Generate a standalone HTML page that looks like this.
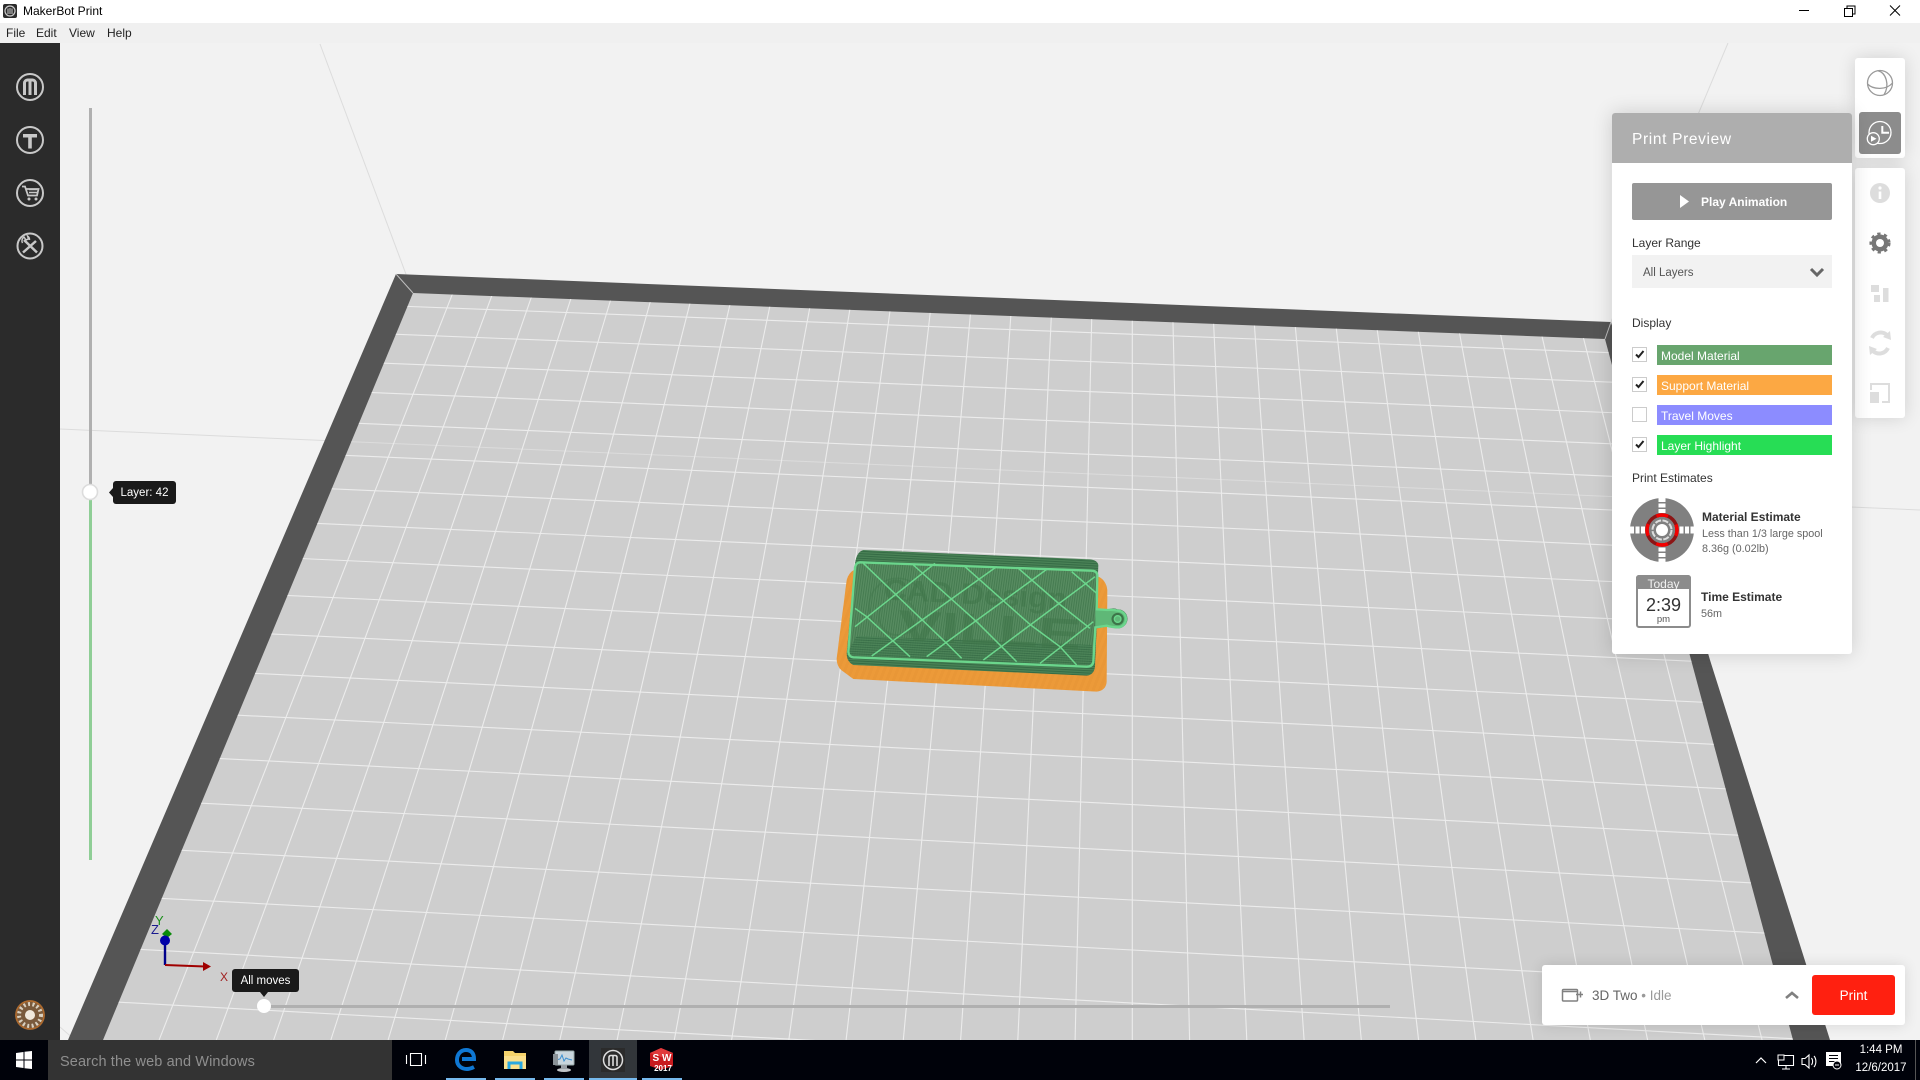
<!DOCTYPE html>
<html><head><meta charset="utf-8"><title>MakerBot Print</title>
<style>
html,body{margin:0;padding:0;width:1920px;height:1080px;overflow:hidden;background:#f2f2f2;font-family:"Liberation Sans","DejaVu Sans",sans-serif}
.a{position:absolute}
.t{position:absolute;white-space:nowrap;line-height:1}
svg{position:absolute;left:0;top:0}
.bar{position:absolute;left:1657px;width:175px;height:20px;color:#fff;font-size:12px;line-height:22px;text-indent:4px}
.cb{position:absolute;left:1632px;width:13px;height:13px;border:1px solid #ccc;background:#fff}
</style></head><body>
<svg width="1920" height="1080" viewBox="0 0 1920 1080">
<defs>
<clipPath id="pl"><polygon points="413,293 1605,339 1793,1040 103,1040"/></clipPath>
<pattern id="or" width="2.600" height="6" patternUnits="userSpaceOnUse" patternTransform="rotate(3)"><rect width="2.600" height="6" fill="#f6a23e"/><rect width="1" height="6" fill="#d98a2e"/></pattern>
<pattern id="gr" width="7" height="7" patternUnits="userSpaceOnUse" patternTransform="rotate(8)"><rect width="7" height="7" fill="#588c61"/><rect width="3" height="7" fill="#457b50"/></pattern>
<pattern id="gd" width="7" height="7" patternUnits="userSpaceOnUse" patternTransform="rotate(3)"><rect width="7" height="7" fill="#4a8256"/><rect width="7" height="3" fill="#356b45"/></pattern>
</defs>
<rect width="1920" height="1080" fill="#f2f2f2"/>
<g stroke="#dcdcdc" stroke-width="1" fill="none">
<line x1="320" y1="44" x2="413" y2="293"/>
<line x1="1728" y1="43" x2="1611" y2="322"/>
<line x1="60" y1="429" x2="1920" y2="510"/>
<line x1="60" y1="1027" x2="75" y2="1040"/>
</g>
<polygon points="396,274 1611,322 1710,660 1830,1040 68,1040" fill="#555"/>
<polygon points="413,293 1605,339 1793,1040 103,1040" fill="#cecece"/>
<path d="M396 274L413 293M1611 322L1605 339" stroke="#bdbdbd" fill="none"/>
<g clip-path="url(#pl)">
<line x1="60" y1="429" x2="1920" y2="510" stroke="#dcdcdc" stroke-width="1"/>
<g stroke="#ececec" stroke-width="1.100">
<line x1="0" y1="290.7" x2="1920" y2="364.6"/><line x1="0" y1="318.7" x2="1920" y2="394.3"/><line x1="0" y1="347.7" x2="1920" y2="425.1"/><line x1="0" y1="377.2" x2="1920" y2="456.5"/><line x1="0" y1="408.2" x2="1920" y2="489.3"/><line x1="0" y1="440.5" x2="1920" y2="523.3"/><line x1="0" y1="474.2" x2="1920" y2="558.7"/><line x1="0" y1="509.2" x2="1920" y2="595.4"/><line x1="0" y1="544.7" x2="1920" y2="632.9"/><line x1="0" y1="582" x2="1920" y2="671.9"/><line x1="0" y1="621" x2="1920" y2="712.6"/><line x1="0" y1="661" x2="1920" y2="754.3"/><line x1="0" y1="703.4" x2="1920" y2="798.4"/><line x1="0" y1="747.4" x2="1920" y2="844.4"/><line x1="0" y1="792.8" x2="1920" y2="891.5"/><line x1="0" y1="840.8" x2="1920" y2="941.2"/><line x1="0" y1="889.8" x2="1920" y2="991.9"/><line x1="0" y1="941.8" x2="1920" y2="1045.6"/><line x1="0" y1="995.6" x2="1920" y2="1101.4"/>
<line x1="452.8" y1="293" x2="159.1" y2="1040"/><line x1="492.8" y1="293" x2="216.3" y2="1040"/><line x1="532.8" y1="293" x2="273.6" y2="1040"/><line x1="572.7" y1="293" x2="330.8" y2="1040"/><line x1="612.7" y1="293" x2="388.1" y2="1040"/><line x1="652.7" y1="293" x2="445.3" y2="1040"/><line x1="692.6" y1="293" x2="502.6" y2="1040"/><line x1="732.6" y1="293" x2="559.8" y2="1040"/><line x1="772.6" y1="293" x2="617.1" y2="1040"/><line x1="812.5" y1="293" x2="674.3" y2="1040"/><line x1="852.5" y1="293" x2="731.6" y2="1040"/><line x1="892.5" y1="293" x2="788.8" y2="1040"/><line x1="932.5" y1="293" x2="846.1" y2="1040"/><line x1="972.4" y1="293" x2="903.3" y2="1040"/><line x1="1012.4" y1="293" x2="960.6" y2="1040"/><line x1="1052.4" y1="293" x2="1017.8" y2="1040"/><line x1="1092.3" y1="293" x2="1075.1" y2="1040"/><line x1="1132.3" y1="293" x2="1132.3" y2="1040"/><line x1="1172.3" y1="293" x2="1189.6" y2="1040"/><line x1="1212.2" y1="293" x2="1246.8" y2="1040"/><line x1="1252.2" y1="293" x2="1304.1" y2="1040"/><line x1="1292.2" y1="293" x2="1361.3" y2="1040"/><line x1="1332.2" y1="293" x2="1418.6" y2="1040"/><line x1="1372.1" y1="293" x2="1475.8" y2="1040"/><line x1="1412.1" y1="293" x2="1533.1" y2="1040"/><line x1="1452.1" y1="293" x2="1590.3" y2="1040"/><line x1="1492" y1="293" x2="1647.6" y2="1040"/><line x1="1532" y1="293" x2="1704.8" y2="1040"/><line x1="1572" y1="293" x2="1762.1" y2="1040"/>
</g></g>
<!-- keychain, coordinates in 3x crop space -->
<g transform="translate(820 530) scale(.33333)">
<path d="M105 118 Q85 128 80 150 L50 385 Q50 412 70 425 L100 447 L830 485 Q858 482 860 455 L862 180 Q858 150 835 140 Z" fill="url(#or)"/>
<path d="M130 60 Q110 65 105 100 L80 370 Q80 395 100 405 L800 437 Q822 435 825 410 L830 295 L860 290 Q880 295 895 295 A28 28 0 0 0 893 238 Q880 232 865 238 L830 235 L835 105 Q832 90 810 88 Z" fill="url(#gd)"/>
<path d="M120 97 Q108 98 105 112 L85 365 Q86 380 100 382 L800 410 Q818 410 820 395 L824 295 L860 287 Q875 292 893 292 A25 25 0 0 0 893 242 Q878 238 862 240 L830 238 L832 135 Q830 122 815 122 Z" fill="url(#gr)"/>
<path d="M110 318 L815 345 L820 395 Q818 410 800 410 L100 382 Q86 380 85 365 Z" fill="url(#gd)" opacity=".8"/>
<g fill="none" stroke="#42784d" stroke-width="5" opacity=".45">
<circle cx="232" cy="230" r="85"/><circle cx="232" cy="260" r="55"/>
</g>
<text transform="translate(190 208) rotate(3)" font-family="Liberation Sans" font-weight="bold" font-size="88" fill="#3f7549" opacity=".5" textLength="550" lengthAdjust="spacingAndGlyphs">CAD Design</text>
<text transform="translate(232 330) rotate(3)" font-family="Liberation Sans" font-weight="bold" font-size="130" fill="#3f7549" opacity=".5" textLength="550" lengthAdjust="spacingAndGlyphs">VILLE</text>
<path d="M826 240 L862 240 Q878 238 893 242 A25 25 0 0 1 893 292 Q875 292 860 287 L826 292 Z" fill="#5fb877"/>
<g fill="none" stroke="#6bd68c" stroke-width="4.500">
<path d="M130 100 L385 345 L425 385 M280 105 L470 275 L590 395 M435 110 L632 285 L720 350 L770 405 M595 115 L718 222 L810 295 M755 125 L830 190 M105 235 L140 260 L270 380 M105 290 L345 100 M155 378 L530 110 M320 380 L680 118 M490 390 L825 140 M660 400 L820 275"/>
<path d="M120 97 Q108 98 105 112 L85 365 Q86 380 100 382 L800 410 Q818 410 820 395 L826 292 L860 287 Q875 292 893 292 A25 25 0 0 0 893 242 Q878 238 862 240 L830 238 L832 135 Q830 122 815 122 Z" stroke-width="7"/>
<circle cx="893" cy="267" r="15" stroke="#3d7549" stroke-width="7"/>
<circle cx="893" cy="267" r="10" stroke="#6bd68c" stroke-width="4"/>
</g>
</g>
<!-- axes -->
<g>
<line x1="165" y1="965" x2="165" y2="940" stroke="#00008c" stroke-width="2.400"/>
<line x1="165" y1="965" x2="205" y2="966.5" stroke="#a00000" stroke-width="2"/>
<polygon points="203,962 211,966.5 203,971" fill="#a00000"/>
<polygon points="167,929 172,934 167,938 162,934" fill="#0a8a0a"/>
<circle cx="165" cy="940.5" r="5" fill="#0000a8"/>
</g>
<!-- sliders -->
<rect x="89" y="108" width="3" height="384" fill="#b0b0b0"/>
<rect x="89" y="492" width="3" height="368" fill="#8fce96"/>
<circle cx="90" cy="492" r="7.500" fill="#fff" stroke="#dcdcdc" stroke-width="1.600"/>
<rect x="270" y="1005" width="1120" height="3" fill="#b0b0b0"/>
<circle cx="264" cy="1006" r="7" fill="#fff"/>
<polygon points="113,488 109,492.5 113,497" fill="#1a1a1a"/>
<polygon points="260,992 268,992 264,997" fill="#1a1a1a"/>
</svg>

<div class="t" style="left:155px;top:914px;font-size:13px;color:#1a8f1a">Y</div>
<div class="t" style="left:151px;top:923px;font-size:13px;color:#1a1a8f">Z</div>
<div class="t" style="left:220px;top:971px;font-size:12px;color:#a02020">X</div>

<div class="a" style="left:113px;top:481px;width:63px;height:23px;background:#1a1a1a;border-radius:3px;color:#fff;font-size:11.5px;line-height:25px;text-align:center">Layer: 42</div>
<div class="a" style="left:232px;top:969px;width:67px;height:23px;background:#1a1a1a;border-radius:3px;color:#fff;font-size:11.5px;line-height:25px;text-align:center">All moves</div>

<!-- chrome -->
<div class="a" style="left:0;top:0;width:1920px;height:23px;background:#fff"></div>
<div class="a" style="left:0;top:23px;width:1920px;height:20px;background:#f0f0f0"></div>
<div class="a" style="left:0;top:43px;width:60px;height:997px;background:#2b2b2b"></div>
<div class="t" style="left:23px;top:5px;font-size:12px;color:#000">MakerBot Print</div>
<div class="t" style="left:6px;top:27px;font-size:12px;color:#222">File</div>
<div class="t" style="left:36px;top:27px;font-size:12px;color:#222">Edit</div>
<div class="t" style="left:69px;top:27px;font-size:12px;color:#222">View</div>
<div class="t" style="left:107px;top:27px;font-size:12px;color:#222">Help</div>

<!-- toolbar cards -->
<div class="a" style="left:1855px;top:58px;width:50px;height:100px;background:#fff;border-radius:3px;box-shadow:0 0 18px rgba(0,0,0,.14)"></div>
<div class="a" style="left:1859px;top:112px;width:42px;height:42px;background:#8c8c8c;border-radius:3px"></div>
<div class="a" style="left:1855px;top:168px;width:50px;height:250px;background:#fff;border-radius:3px;box-shadow:0 0 18px rgba(0,0,0,.14)"></div>

<!-- panel -->
<div class="a" style="left:1612px;top:113px;width:240px;height:541px;background:#fff;border-radius:3px;box-shadow:0 0 20px rgba(0,0,0,.16)"></div>
<div class="a" style="left:1612px;top:113px;width:240px;height:50px;background:#aeaeae;border-radius:3px 3px 0 0"></div>
<div class="t" style="left:1632px;top:132px;font-size:15.5px;color:#fff;letter-spacing:.65px">Print Preview</div>
<div class="a" style="left:1632px;top:183px;width:200px;height:37px;background:#969696;border-radius:2px"></div>
<div class="t" style="left:1701px;top:195.5px;font-size:12px;font-weight:bold;color:#fff">Play Animation</div>
<div class="t" style="left:1632px;top:237px;font-size:12px;color:#333">Layer Range</div>
<div class="a" style="left:1632px;top:255px;width:200px;height:33px;background:#f2f2f2"></div>
<div class="t" style="left:1643px;top:268px;font-size:11.5px;color:#555">All Layers</div>
<div class="t" style="left:1632px;top:317px;font-size:12px;color:#333">Display</div>

<div class="cb" style="top:347px"></div><div class="cb" style="top:377px"></div><div class="cb" style="top:407px"></div><div class="cb" style="top:437px"></div>
<div class="bar" style="top:345px;background:#68a56e">Model Material</div>
<div class="bar" style="top:375px;background:#fca843">Support Material</div>
<div class="bar" style="top:405px;background:#8c8cff">Travel Moves</div>
<div class="bar" style="top:435px;background:#27dd55">Layer Highlight</div>

<div class="t" style="left:1632px;top:472px;font-size:12px;color:#333">Print Estimates</div>
<div class="t" style="left:1702px;top:511px;font-size:12px;font-weight:bold;color:#333">Material Estimate</div>
<div class="t" style="left:1702px;top:529px;font-size:10.8px;color:#666">Less than 1/3 large spool</div>
<div class="t" style="left:1702px;top:543.500px;font-size:10.8px;color:#666">8.36g (0.02lb)</div>
<div class="t" style="left:1701px;top:591px;font-size:12px;font-weight:bold;color:#333">Time Estimate</div>
<div class="t" style="left:1701px;top:608.500px;font-size:10.8px;color:#666">56m</div>

<!-- calendar -->
<div class="a" style="left:1636px;top:575px;width:51px;height:49px;border:2px solid #8c8c8c;border-radius:3px;background:#fff"></div>
<div class="a" style="left:1636px;top:575px;width:55px;height:14px;background:#8c8c8c;border-radius:3px 3px 0 0;overflow:hidden;color:#f2f2f2;font-size:12px;line-height:18px;text-align:center">Today</div>
<div class="t" style="left:1636px;width:55px;text-align:center;top:596px;font-size:18px;color:#333">2:39</div>
<div class="t" style="left:1636px;width:55px;text-align:center;top:615px;font-size:9.500px;color:#555">pm</div>

<!-- print bar -->
<div class="a" style="left:1542px;top:965px;width:363px;height:60px;background:#fff;border-radius:3px;box-shadow:0 0 14px rgba(0,0,0,.12)"></div>
<div class="a" style="left:1812px;top:975px;width:83px;height:40px;background:#ff2010;border-radius:3px;color:#fff;font-size:13.5px;line-height:42px;text-align:center">Print</div>
<div class="t" style="left:1592px;top:989px;font-size:13.5px;color:#666">3D Two <span style="color:#999">• Idle</span></div>

<!-- taskbar -->
<div class="a" style="left:0;top:1040px;width:1920px;height:40px;background:#00020a"></div>
<div class="a" style="left:48px;top:1040px;width:344px;height:40px;background:#333"></div>
<div class="t" style="left:60px;top:1055px;font-size:14.5px;color:#8f8f8f;letter-spacing:.12px">Search the web and Windows</div>
<div class="a" style="left:589px;top:1040px;width:48px;height:40px;background:#32363a"></div>
<div class="a" style="left:446px;top:1078px;width:40px;height:2px;background:#76b9ed"></div>
<div class="a" style="left:495px;top:1078px;width:40px;height:2px;background:#76b9ed"></div>
<div class="a" style="left:544px;top:1078px;width:40px;height:2px;background:#76b9ed"></div>
<div class="a" style="left:589px;top:1078px;width:48px;height:2px;background:#76b9ed"></div>
<div class="a" style="left:642px;top:1078px;width:40px;height:2px;background:#76b9ed"></div>
<div class="t" style="left:1841px;width:80px;text-align:center;top:1045px;font-size:11.5px;color:#fff">1:44 PM</div>
<div class="t" style="left:1841px;width:80px;text-align:center;top:1063px;font-size:11.5px;color:#fff">12/6/2017</div>

<!-- icons overlay -->
<svg width="1920" height="1080" viewBox="0 0 1920 1080">
<!-- title icon -->
<rect x="3" y="4" width="14" height="14" rx="2" fill="#2b2b2b"/>
<circle cx="10" cy="11" r="5" fill="none" stroke="#ccc" stroke-width="1.200"/>
<path d="M8 14V8.500M10 14V8M12 14V8.500" stroke="#ccc" stroke-width="1"/>
<!-- window controls -->
<path d="M1799 10.500H1809" stroke="#000" fill="none"/>
<path d="M1844.500 8.500h8v8h-8zM1847 8.500V6h8v8h-2.500" stroke="#000" fill="none"/>
<path d="M1890 5.500l10 10M1900 5.500l-10 10" stroke="#000" fill="none"/>
<!-- sidebar icons -->
<g fill="none" stroke="#c8c8c8" stroke-width="2">
<circle cx="30" cy="87" r="13"/>
<path d="M24.500 95V83a3 3 0 0 1 3-3h5a3 3 0 0 1 3 3v12M30 80v15" stroke-width="3"/>
<circle cx="30" cy="140" r="13"/>
<path d="M23 134h14v3.500h-5.200v11h-3.600v-11H23z" fill="#c8c8c8" stroke="none"/>
<circle cx="30" cy="193" r="13"/>
<path d="M22 186.500h3l3 9h9l1.500-6.500H26" stroke-width="1.800"/>
<path d="M29 189.500h8M29 192.500h8" stroke-width="1.600"/>
<circle cx="29" cy="199" r="1.500" fill="#c8c8c8" stroke="none"/>
<circle cx="36" cy="199" r="1.500" fill="#c8c8c8" stroke="none"/>
<circle cx="30" cy="246" r="12.500"/>
<path d="M24 240l13 12.500M36 241l-13 11.500" stroke-width="2.500"/>
<path d="M22.500 243a4.500 4.500 0 0 1 1.500-6l2 3 2.500-1-1-3a4.500 4.500 0 0 1 2 4" stroke-width="1.500"/>
</g>
<!-- avatar -->
<circle cx="30" cy="1015" r="15" fill="#7a5a3c"/>
<circle cx="30" cy="1015" r="11" fill="none" stroke="#d9d0c0" stroke-width="4" stroke-dasharray="2 2.500"/>
<circle cx="30" cy="1015" r="14" fill="none" stroke="#b06a2c" stroke-width="1.500"/>
<circle cx="30" cy="1015" r="5" fill="#f0e8dc"/>
<!-- right toolbar icons -->
<g fill="none" stroke="#9a9a9a" stroke-width="1.300">
<circle cx="1880" cy="83" r="12.500"/>
<path d="M1867.500 84c6 6 19 6 25-1M1878 70.800c8 2 12 14 6 24"/>
</g>
<g fill="none" stroke="#fff" stroke-width="1.300">
<circle cx="1880" cy="132.500" r="11"/>
<path d="M1882.300 126v6.700h6.700" stroke-width="2"/>
<circle cx="1873.300" cy="138.700" r="6" fill="#8c8c8c"/>
</g>
<polygon points="1871,135.700 1876.500,138.700 1871,141.700" fill="#fff"/>
<circle cx="1880" cy="193" r="10" fill="#ddd"/>
<rect x="1878.700" y="191.500" width="2.600" height="7.500" fill="#fff"/><circle cx="1880" cy="188" r="1.600" fill="#fff"/>
<circle cx="1880" cy="243" r="8.500" fill="#777"/>
<circle cx="1880" cy="243" r="9.300" fill="none" stroke="#777" stroke-width="2.500" stroke-dasharray="3.300 3.500"/>
<circle cx="1880" cy="243" r="4" fill="#fff"/>
<g fill="#ddd">
<rect x="1871" y="285" width="8" height="7"/><rect x="1874" y="295" width="6" height="7"/><rect x="1883" y="288" width="5.500" height="14"/>
<rect x="1870" y="392" width="9" height="11"/>
</g>
<path d="M1871 390v-6h18v18h-7" fill="none" stroke="#ddd" stroke-width="2"/>
<g fill="none" stroke="#ddd" stroke-width="4">
<path d="M1872 338a9.500 9.500 0 0 1 15-3M1888 348a9.500 9.500 0 0 1-15 3"/>
</g>
<polygon points="1883,337 1891,340 1890,331" fill="#ddd"/><polygon points="1877,349 1869,346 1870,355" fill="#ddd"/>
<!-- panel icons -->
<polygon points="1680,195 1680,208 1689,201.500" fill="#fff"/>
<path d="M1811 269l6 6 6-6" fill="none" stroke="#666" stroke-width="3"/>
<g fill="none" stroke="#222" stroke-width="2">
<path d="M1636 354.500l2.500 2.500 5-6M1636 384.500l2.500 2.500 5-6M1636 444.500l2.500 2.500 5-6"/>
</g>
<!-- spool -->
<circle cx="1662" cy="530" r="32" fill="#808080"/>
<path d="M1662 498v64M1630 530h64" stroke="#fff" stroke-width="7" stroke-dasharray="4 1.500"/>
<circle cx="1662" cy="530" r="15" fill="#808080" stroke="#8c1515" stroke-width="3.500"/>
<circle cx="1662" cy="530" r="15" fill="none" stroke="#f40000" stroke-width="3.500" stroke-dasharray="11.800 11.800" stroke-dashoffset="5.900"/>
<circle cx="1662" cy="530" r="9.500" fill="none" stroke="#ddd" stroke-width="2" stroke-dasharray="6 1.500"/>
<circle cx="1662" cy="530" r="6" fill="#fff"/>
<!-- printer -->
<rect x="1562.500" y="989.500" width="15" height="11.500" rx="1" fill="none" stroke="#808080" stroke-width="1.500"/>
<path d="M1562 991.500h16M1576 994.500h7M1580.500 991.500v6" stroke="#808080" stroke-width="1.500" fill="none"/>
<path d="M1786 998l6-5 6 5" fill="none" stroke="#808080" stroke-width="2.600"/>
<!-- taskbar icons -->
<g fill="#fff">
<polygon points="16,1053 23.500,1052 23.500,1059.500 16,1059.500"/>
<polygon points="24.500,1051.800 32,1051 32,1059.500 24.500,1059.500"/>
<polygon points="16,1060.500 23.500,1060.500 23.500,1068 16,1067"/>
<polygon points="24.500,1060.500 32,1060.500 32,1069 24.500,1068.200"/>
</g>
<path d="M410.500 1053.500h11v12h-11zM407 1055.500h-.500v8h.500M425 1055.500h.500v8h-.500" fill="none" stroke="#fff" stroke-width="1.100"/>
<path d="M462 1059h12c0-6-3-9-8-9-6 0-9 5-9 10 0 6 5 9 10 9 3 0 5-1 7-2" fill="none" stroke="#0f78d4" stroke-width="4"/>
<path d="M504 1051h9l2 2h11v16h-22z" fill="#f5d36b"/>
<rect x="504" y="1056" width="22" height="13" fill="#fbe08c"/>
<path d="M509 1069v-6h12v6" fill="none" stroke="#2aa8e0" stroke-width="3"/>
<rect x="555" y="1051" width="19" height="14" rx="1" fill="#c9d6de" stroke="#9aa" stroke-width="1"/>
<path d="M556 1060l4-1 2-4 2 6 2-3 2 1 4 1" fill="none" stroke="#3a8fd0" stroke-width="1"/>
<rect x="553" y="1054" width="5" height="11" fill="#8a9298"/>
<ellipse cx="564" cy="1070" rx="7" ry="2" fill="#c0c4c8"/>
<rect x="561" y="1065" width="6" height="4" fill="#9aa0a6"/>
<rect x="601" y="1048" width="24" height="24" fill="#2b2b2b"/>
<circle cx="613" cy="1060" r="9.500" fill="none" stroke="#ddd" stroke-width="1.500"/>
<path d="M609 1066v-9a2 2 0 0 1 2-1.500h4a2 2 0 0 1 2 1.500v9M613 1056v10" stroke="#ddd" stroke-width="1.600" fill="none"/>
<path d="M650 1053l11-5 12 5v13l-12 4-11-4z" fill="#c81a1e"/>
<path d="M661 1048l12 5-12 4-11-4z" fill="#e03a3c"/>
<!-- tray -->
<path d="M1756 1063l5-5 5 5" fill="none" stroke="#fff" stroke-width="1.200"/>
<path d="M1778.500 1055.500h15v10h-15zM1786 1065.500v3M1782 1069h8" fill="none" stroke="#fff" stroke-width="1.100"/>
<rect x="1778" y="1055" width="6" height="5" fill="#00020a" stroke="#fff"/>
<path d="M1802 1058.500h3l4-3.500v13l-4-3.500h-3zM1811.500 1058c1.500 2 1.500 5 0 7M1814 1056c2.500 3 2.500 8 0 11" fill="none" stroke="#fff" stroke-width="1.100"/>
<path d="M1826 1052h15v12h-5l-3 2h-7z" fill="#fff"/>
<path d="M1829 1055.500h9M1829 1058.500h9M1829 1061.500h6" stroke="#00020a"/>
<circle cx="1837" cy="1065" r="4" fill="#00020a" stroke="#fff"/>
<path d="M1835 1065h4" stroke="#fff"/>
<path d="M1915.500 1040v40" stroke="#555"/>
</svg>
<div class="t" style="left:650px;top:1054px;width:24px;text-align:center;font-size:10px;font-weight:bold;color:#fff">S W</div>
<div class="t" style="left:651px;top:1065px;width:24px;text-align:center;font-size:8px;font-weight:bold;color:#fff">2017</div>
</body></html>
